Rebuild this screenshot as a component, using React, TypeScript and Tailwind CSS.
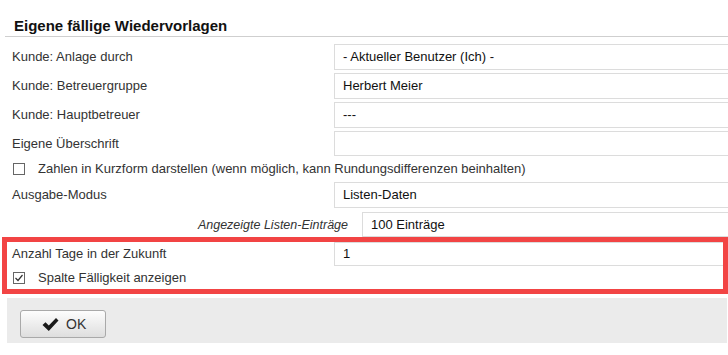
import React from 'react';

type FieldProps = {
  label: string;
  value?: string;
  rowClass: string;
  boxClass: string;
};

const Field: React.FC<FieldProps> = ({ label, value = '', rowClass, boxClass }) => (
  <div className={`flex items-center ${rowClass}`}>
    <div className="w-[334px] shrink-0 pl-3">{label}</div>
    <div className={`flex w-[394px] shrink-0 items-center border border-r-0 border-[#dcdcdc] pl-2 text-[#111] ${boxClass}`}>
      {value}
    </div>
  </div>
);

const CheckBox: React.FC<{ checked?: boolean }> = ({ checked = false }) => (
  <span className="flex h-[12px] w-[12px] shrink-0 items-center justify-center border border-[#666] bg-white">
    {checked && (
      <svg width="10" height="10" viewBox="0 0 10 10">
        <path d="M1.5 5 L4 7.5 L8.5 2" fill="none" stroke="#333" strokeWidth="1.2" />
      </svg>
    )}
  </span>
);

const App: React.FC = () => {
  return (
    <div className="h-[355px] w-[728px] overflow-hidden bg-white font-['Liberation_Sans',Arial,sans-serif] text-[13px] leading-4 text-[#333]">
      <div className="ml-[5px] h-[37px] border-b border-[#cfcfcf] pl-[9px] pt-[17px] text-[15px] font-bold leading-[18px] text-[#111]">
        Eigene fällige Wiedervorlagen
      </div>

      <Field label="Kunde: Anlage durch" value="- Aktueller Benutzer (Ich) -" rowClass="mt-[7px]" boxClass="h-[26px]" />
      <Field label="Kunde: Betreuergruppe" value="Herbert Meier" rowClass="mt-[3px]" boxClass="h-[26px]" />
      <Field label="Kunde: Hauptbetreuer" value="---" rowClass="mt-[3px]" boxClass="h-[26px]" />
      <Field label="Eigene Überschrift" rowClass="mt-[3px]" boxClass="h-[25px]" />

      <div className="flex h-[26px] items-center pl-[13px]">
        <CheckBox />
        <span className="ml-[13px]">Zahlen in Kurzform darstellen (wenn möglich, kann Rundungsdifferenzen beinhalten)</span>
      </div>

      <Field label="Ausgabe-Modus" value="Listen-Daten" rowClass="" boxClass="h-[26px]" />

      <div className="mt-[4px] flex items-center">
        <div className="w-[362px] shrink-0 pr-[14px] text-right text-[12.5px] italic">Angezeigte Listen-Einträge</div>
        <div className="flex h-[25px] w-[366px] shrink-0 items-center border border-r-0 border-[#dcdcdc] pl-2 text-[#111]">
          100 Einträge
        </div>
      </div>

      <div className="ml-[2px] w-[726px] border-[5px] border-[#f24444]">
        <div className="flex items-center">
          <div className="w-[327px] shrink-0 pl-[5px]">Anzahl Tage in der Zukunft</div>
          <div className="flex h-[24px] flex-1 items-center border border-r-0 border-[#dcdcdc] pl-2 text-[#111]">1</div>
        </div>
        <div className="flex h-[23px] items-center pl-[6px]">
          <CheckBox checked />
          <span className="ml-[13px]">Spalte Fälligkeit anzeigen</span>
        </div>
      </div>

      <div className="ml-[7px] mt-[4px] h-[45px] w-[720px] bg-[#ebebeb] pl-[13px] pt-[12px]">
        <button
          type="button"
          className="flex h-[28px] w-[86px] items-center rounded-[3px] border border-[#a9a9a9] bg-gradient-to-b from-[#fdfdfd] to-[#dedede] pl-[21px] text-[14px] text-[#333]"
        >
          <svg width="17" height="15" viewBox="0 0 17 15" className="mr-[7px]">
            <path d="M0.5 8 L3.5 5.2 L6.8 8.6 L14 1 L16.5 3.6 L6.8 14 Z" fill="#1a1a1a" />
          </svg>
          OK
        </button>
      </div>
    </div>
  );
};

export default App;
